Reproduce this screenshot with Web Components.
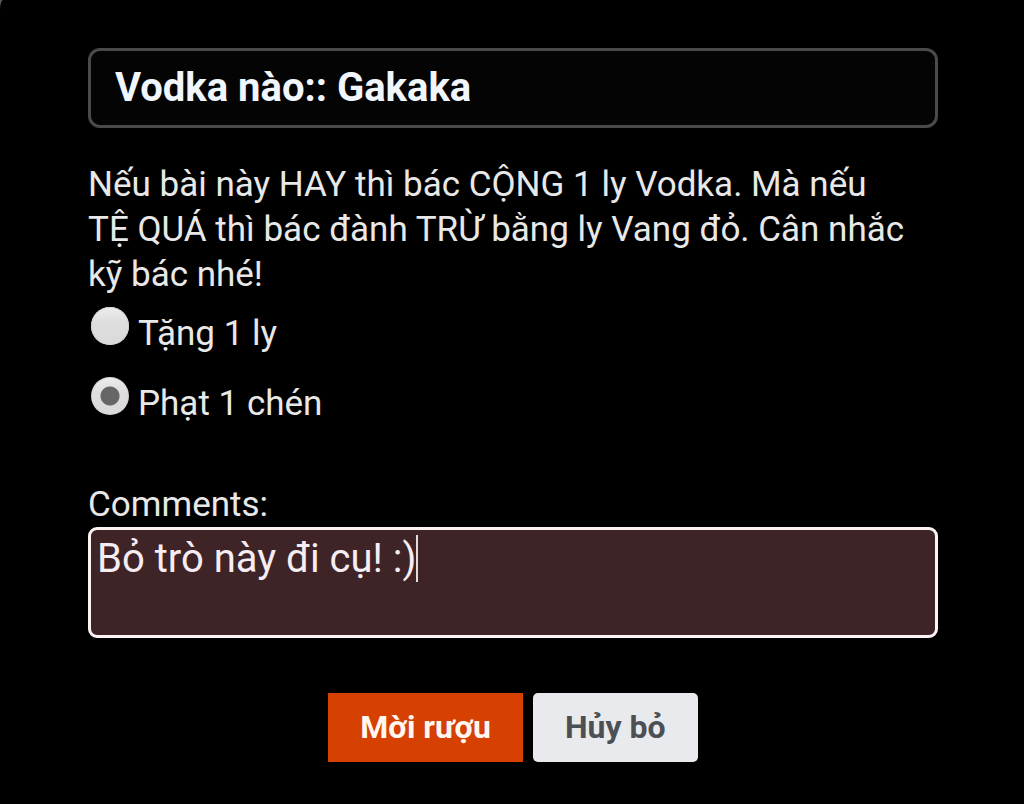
<!DOCTYPE html>
<html lang="vi">
<head>
<meta charset="utf-8">
<meta name="viewport" content="width=device-width, initial-scale=1">
<title>Vodka</title>
<style>
html { background: #5c5c5a; }
body { margin: 0; font-family: Roboto, "Noto Sans", sans-serif; font-size: 35px; line-height: 45px; color: #e8e8e8; }
</style>
</head>
<body>
<vote-dialog></vote-dialog>
<script>
class DialogTitle extends HTMLElement {
  constructor() {
    super();
    this.attachShadow({ mode: 'open' }).innerHTML = `
      <style>
        :host { display: block; box-sizing: border-box; border: 3px solid #4a4a4a; border-radius: 12px; background: #040404; padding: 12px 24px; }
        h1 { margin: 0; font-size: 40px; line-height: 50px; font-weight: 700; color: #f0f6fc; }
      </style>
      <h1><slot></slot></h1>`;
  }
}
customElements.define('dialog-title', DialogTitle);

class VoteOptions extends HTMLElement {
  constructor() {
    super();
    this.attachShadow({ mode: 'open' }).innerHTML = `
      <style>
        :host { display: block; }
        fieldset { border: 0; margin: 0; padding: 0; min-width: 0; display: flex; flex-direction: column; gap: 20px; }
        .row { display: flex; align-items: baseline; gap: 9px; padding-left: 3px; height: 50px; }
        input { appearance: none; flex: none; margin: 0; width: 38px; height: 38px; border-radius: 50%; background: linear-gradient(#ededed, #dedede 40%, #dadada); box-shadow: inset 0 0 0 1px #d2d2d2; }
        input:checked { background: radial-gradient(circle, #666 9px, transparent 10px), linear-gradient(#ededed, #dedede 40%, #dadada); }
      </style>
      <fieldset>
        <div class="row"><input type="radio" name="vote" id="give"><label for="give">Tặng 1 ly</label></div>
        <div class="row"><input type="radio" name="vote" id="punish" checked><label for="punish">Phạt 1 chén</label></div>
      </fieldset>`;
  }
}
customElements.define('vote-options', VoteOptions);

class CommentField extends HTMLElement {
  constructor() {
    super();
    this.attachShadow({ mode: 'open' }).innerHTML = `
      <style>
        :host { display: block; }
        label { display: block; }
        .box { position: relative; }
        textarea { display: block; box-sizing: border-box; width: 100%; height: 111px; margin: 0; padding: 4px 6px; border: 3px solid #fbf3f4; border-radius: 9px; background: #3e2426; color: #f6edf4; font: 400 40px/50px Roboto, "Noto Sans", sans-serif; resize: none; outline: 0; overflow: hidden; caret-color: transparent; }
        .caret { position: absolute; top: 8px; width: 2px; height: 47px; background: #e4dade; }
      </style>
      <label for="comment">Comments:</label>
      <div class="box">
        <textarea id="comment">Bỏ trò này đi cụ! :)</textarea>
        <span class="caret"></span>
      </div>`;
  }
  connectedCallback() {
    const area = this.shadowRoot.querySelector('textarea');
    const caret = this.shadowRoot.querySelector('.caret');
    const pen = document.createElement('canvas').getContext('2d');
    const place = () => {
      const css = getComputedStyle(area);
      pen.font = `${css.fontSize} ${css.fontFamily}`;
      const before = area.value.slice(0, area.selectionStart || area.value.length);
      caret.style.left = Math.floor(area.clientLeft + parseInt(css.paddingLeft) + pen.measureText(before).width) + 'px';
    };
    area.addEventListener('input', place);
    place();
  }
}
customElements.define('comment-field', CommentField);

class ActionButton extends HTMLElement {
  constructor() {
    super();
    this.attachShadow({ mode: 'open' }).innerHTML = `
      <style>
        :host { display: block; }
        button { display: block; margin: 0; border: 0; border-radius: 5px; padding: 12px 32px; font: 700 32px/45px Roboto, "Noto Sans", sans-serif; background: #e9eaee; color: #4c5055; cursor: pointer; }
        :host([primary]) button { border-radius: 0; background: #d64000; color: #fff7f0; }
      </style>
      <button type="button"><slot></slot></button>`;
  }
}
customElements.define('action-button', ActionButton);

class VoteDialog extends HTMLElement {
  constructor() {
    super();
    this.attachShadow({ mode: 'open' }).innerHTML = `
      <style>
        :host { display: block; box-sizing: border-box; min-height: 100vh; padding: 48px 86px 40px 88px; background: #000; border-top-left-radius: 3px 10px; }
        p { margin: 34px 0 10px; padding-right: 30px; }
        comment-field { margin-top: 55px; }
        .actions { display: flex; justify-content: center; gap: 10px; margin-top: 55px; }
      </style>
      <dialog-title>Vodka nào:: Gakaka</dialog-title>
      <p>Nếu bài này HAY thì bác CỘNG 1 ly Vodka. Mà nếu TỆ QUÁ thì bác đành TRỪ bằng ly Vang đỏ. Cân nhắc kỹ bác nhé!</p>
      <vote-options></vote-options>
      <comment-field></comment-field>
      <div class="actions">
        <action-button primary>Mời rượu</action-button>
        <action-button>Hủy bỏ</action-button>
      </div>`;
  }
}
customElements.define('vote-dialog', VoteDialog);
</script>
</body>
</html>
